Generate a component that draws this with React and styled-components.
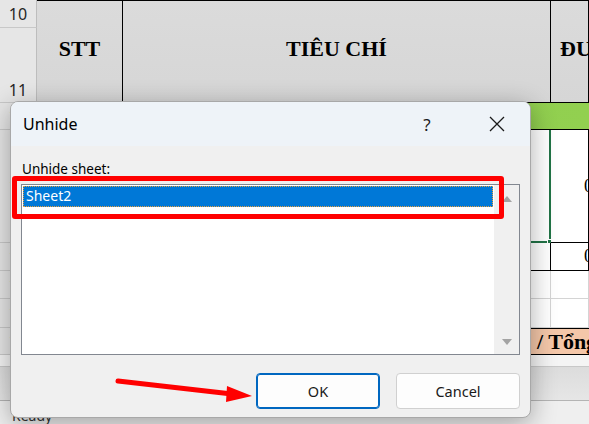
import React from 'react';
import styled, { createGlobalStyle } from 'styled-components';

const Global = createGlobalStyle`
  html, body { margin: 0; padding: 0; background: #fff; }
  body { font-family: "Noto Sans", "Liberation Sans", sans-serif; }
`;

const Screen = styled.div`
  position: relative;
  width: 589px;
  height: 424px;
  overflow: hidden;
  background: #fff;
`;

const Sheet = styled.div`
  display: grid;
  grid-template-columns: 37px 86px 428px 1fr;
  grid-template-rows: 28px 75px 27px 113px 28px 28px 29px 27px;
`;

const RowHead = styled.div`
  grid-column: 1;
  grid-row: ${(p) => p.row};
  box-sizing: border-box;
  background: #e6e6e6;
  border-right: 1px solid #bdbdbd;
  border-bottom: 1px solid #c8c8c8;
  display: flex;
  align-items: ${(p) => (p.bottom ? 'flex-end' : 'center')};
  justify-content: center;
  padding-bottom: ${(p) => (p.bottom ? '1px' : '0')};
  font-size: 16px;
  color: #262626;
`;

const Head = styled.div`
  grid-column: ${(p) => p.col};
  grid-row: 1 / span 2;
  box-sizing: border-box;
  background: linear-gradient(#dbdbdb, #d6d6d6);
  border-top: 1px solid #000;
  border-right: 1px solid #000;
  border-bottom: 1px solid #000;
  display: flex;
  align-items: center;
  justify-content: ${(p) => (p.left ? 'flex-start' : 'center')};
  padding-left: ${(p) => (p.left ? '9px' : '0')};
  padding-bottom: 6px;
  overflow: hidden;
  white-space: nowrap;
  font-family: "Liberation Serif", "Times New Roman", serif;
  font-weight: bold;
  font-size: 22px;
  color: #000;
`;

const Band = styled.div`
  grid-column: 2 / span 3;
  grid-row: ${(p) => p.row};
  box-sizing: border-box;
  background: ${(p) => p.bg};
  border-top: ${(p) => (p.ruled ? '1px solid #000' : '0')};
  border-bottom: 1px solid #000;
  display: flex;
  align-items: center;
  padding-left: ${(p) => p.indent || 0}px;
  overflow: hidden;
  white-space: nowrap;
  font-family: "Liberation Serif", "Times New Roman", serif;
  font-weight: bold;
  font-size: 22px;
  color: #000;
`;

const Cell = styled.div`
  position: relative;
  grid-column: ${(p) => p.col};
  grid-row: ${(p) => p.row};
  box-sizing: border-box;
  background: #fff;
  border-right: 1px solid ${(p) => p.line || '#000'};
  border-bottom: 1px solid ${(p) => p.line || '#000'};
  display: flex;
  align-items: center;
  padding-left: 33px;
  overflow: hidden;
  white-space: nowrap;
  font-family: "Liberation Serif", "Times New Roman", serif;
  font-size: 18px;
  color: #000;
`;

const Selected = styled(Cell)`
  overflow: visible;
  border-right: 2px solid #217346;
  border-bottom: 2px solid #217346;
  &::after {
    content: '';
    position: absolute;
    right: -5px;
    bottom: -5px;
    width: 7px;
    height: 7px;
    background: #217346;
    border: 1px solid #fff;
    box-sizing: border-box;
  }
`;

const TabBar = styled.div`
  height: 11px;
  background: #f4f4f4;
  border-bottom: 1px solid #c8c8c8;
`;

const Scroller = styled.div`
  height: 33px;
  background: linear-gradient(#dcdcdc, #e6e6e6);
  border-bottom: 1px solid #b4b4b4;
`;

const Status = styled.div`
  height: 24px;
  background: #efefef;
  display: flex;
  align-items: flex-end;
  padding-left: 12px;
  font-size: 14px;
  color: #333;
`;

const Dialog = styled.div`
  position: absolute;
  left: 10px;
  top: 101px;
  width: 521px;
  height: 317px;
  box-sizing: border-box;
  border-radius: 8px;
  border: 1px solid #a8a8a8;
  background: #f0f0f0;
  box-shadow: 0 6px 26px rgba(0, 0, 0, 0.32);
  display: flex;
  flex-direction: column;
  overflow: hidden;
  font-family: "Noto Sans", "Open Sans", sans-serif;
  color: #000;
`;

const TitleBar = styled.div`
  height: 44px;
  flex: none;
  background: #eef3f8;
  display: flex;
  align-items: center;
  padding-left: 12px;
  font-size: 16px;
`;

const Title = styled.div`
  flex: 1;
`;

const TitleButton = styled.div`
  width: ${(p) => p.w}px;
  height: 44px;
  display: flex;
  align-items: center;
  justify-content: center;
  font-size: 17px;
  color: #1a1a1a;
`;

const Body = styled.div`
  flex: 1;
  display: flex;
  flex-direction: column;
  padding: 14px 10px 10px 10px;
`;

const Label = styled.div`
  font-size: 13.5px;
  height: 25px;
  line-height: 18px;
  padding-left: 1px;
  u { text-decoration-thickness: 1px; text-underline-offset: 2px; }
`;

const List = styled.div`
  height: 171px;
  box-sizing: border-box;
  border: 1px solid #828790;
  background: #fff;
  display: flex;
  margin-top: -1px;
`;

const Items = styled.div`
  flex: 1;
  padding: 1px;
`;

const Item = styled.div`
  height: 21px;
  box-sizing: border-box;
  background: #0078d7;
  outline: 1px dotted #e8a040;
  outline-offset: -1px;
  color: #fff;
  font-size: 14px;
  line-height: 20px;
  padding-left: 3px;
`;

const ScrollTrack = styled.div`
  width: 25px;
  background: #f0f0f0;
  display: flex;
  flex-direction: column;
  justify-content: space-between;
  align-items: center;
  padding: 11px 0 9px;
`;

const Arrow = styled.div`
  width: 0;
  height: 0;
  border-left: 5px solid transparent;
  border-right: 5px solid transparent;
  ${(p) => (p.down ? 'border-top: 6px solid #a3a3a3;' : 'border-bottom: 6px solid #a3a3a3;')}
`;

const Buttons = styled.div`
  display: flex;
  justify-content: flex-end;
  gap: 16px;
  margin-top: 18px;
`;

const Button = styled.div`
  width: 124px;
  height: 36px;
  box-sizing: border-box;
  border-radius: 4px;
  background: #fdfdfd;
  border: 1px solid ${(p) => (p.primary ? '#0067c0' : '#d0d0d0')};
  box-shadow: ${(p) => (p.primary ? 'inset 0 0 0 1px #0067c0' : 'none')};
  display: flex;
  align-items: center;
  justify-content: center;
  font-size: 14.5px;
  color: #1a1a1a;
`;

const Highlight = styled.div`
  position: absolute;
  left: 12px;
  top: 176px;
  width: 492px;
  height: 43px;
  box-sizing: border-box;
  border: 5px solid #ff0000;
  border-radius: 3px;
`;

const Pointer = styled.svg`
  position: absolute;
  left: 0;
  top: 0;
`;

const App = () => (
  <Screen>
    <Global />
    <Sheet>
      <RowHead row={1}>10</RowHead>
      <RowHead row={2} bottom>11</RowHead>
      <RowHead row={3}>12</RowHead>
      <RowHead row={4}>13</RowHead>
      <RowHead row={5}>14</RowHead>
      <RowHead row={6}>15</RowHead>
      <RowHead row={7}>16</RowHead>
      <RowHead row={8}>17</RowHead>

      <Head col={2}>STT</Head>
      <Head col={3}>TIÊU CHÍ</Head>
      <Head col={4} left>ĐƯỢC</Head>

      <Band row={3} bg="linear-gradient(90deg, #8cc84b, #92d050)" />

      <Cell col={2} row={4} />
      <Selected col={3} row={4} />
      <Cell col={4} row={4}>0</Cell>

      <Cell col={2} row={5} />
      <Cell col={3} row={5} />
      <Cell col={4} row={5}>0</Cell>

      <Cell col={2} row={6} line="#d4d4d4" />
      <Cell col={3} row={6} line="#d4d4d4" />
      <Cell col={4} row={6} line="#d4d4d4" />
      <Cell col={2} row={7} line="#d4d4d4" />
      <Cell col={3} row={7} line="#d4d4d4" />
      <Cell col={4} row={7} line="#d4d4d4" />

      <Band row={8} bg="#f4c7a9" indent={500} ruled>/ Tổng điểm</Band>
    </Sheet>
    <TabBar />
    <Scroller />
    <Status>Ready</Status>

    <Dialog>
      <TitleBar>
        <Title>Unhide</Title>
        <TitleButton w={74}>?</TitleButton>
        <TitleButton w={66}>
          <svg width="16" height="16" viewBox="0 0 16 16">
            <path d="M1 1 L15 15 M15 1 L1 15" stroke="#1a1a1a" strokeWidth="1.3" fill="none" />
          </svg>
        </TitleButton>
      </TitleBar>
      <Body>
        <Label><u>U</u>nhide sheet:</Label>
        <List>
          <Items>
            <Item>Sheet2</Item>
          </Items>
          <ScrollTrack>
            <Arrow />
            <Arrow down />
          </ScrollTrack>
        </List>
        <Buttons>
          <Button primary>OK</Button>
          <Button>Cancel</Button>
        </Buttons>
      </Body>
    </Dialog>

    <Highlight />
    <Pointer width="589" height="424" viewBox="0 0 589 424">
      <line x1="118" y1="381" x2="232" y2="394" stroke="#ff0000" strokeWidth="5" strokeLinecap="round" />
      <polygon points="227,386 252,396 226,402" fill="#ff0000" />
    </Pointer>
  </Screen>
);

export default App;
